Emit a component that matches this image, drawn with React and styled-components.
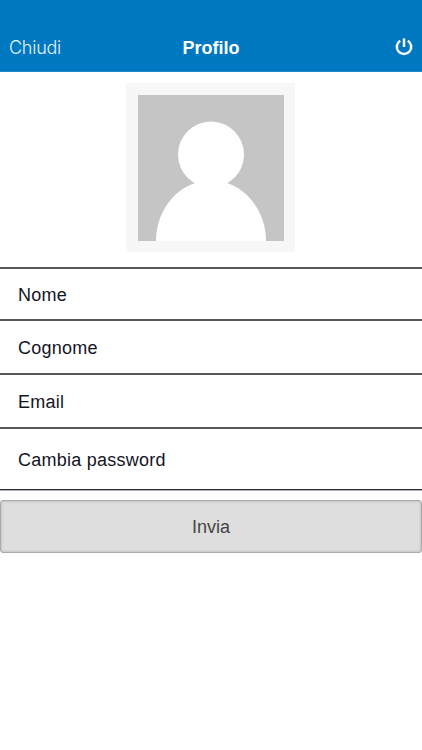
import React from 'react';
import styled, { createGlobalStyle } from 'styled-components';

const GlobalStyle = createGlobalStyle`
  * {
    box-sizing: border-box;
  }
  body {
    margin: 0;
    background-color: #fff;
    font-family: "Liberation Sans", Arial, sans-serif;
  }
`;

const Page = styled.div`
  display: flex;
  flex-direction: column;
  width: 100%;
  min-height: 750px;
  background-color: #fff;
`;

const NavBar = styled.header`
  display: grid;
  grid-template-columns: 1fr auto 1fr;
  align-items: center;
  height: 72px;
  padding: 24px 9px 0 9px;
  background-color: #0078c1;
  border-bottom: 1px solid #2188c8;
  color: #fff;
`;

const CloseButton = styled.button`
  justify-self: start;
  padding: 0;
  border: none;
  background: none;
  color: #e4f3fb;
  font-family: Inter, "Liberation Sans", sans-serif;
  font-size: 18px;
  font-weight: 300;
  letter-spacing: -0.25px;
  line-height: 24px;
`;

const Title = styled.h1`
  margin: 0;
  font-size: 18px;
  font-weight: bold;
  line-height: 24px;
`;

const PowerButton = styled.button`
  display: flex;
  justify-self: end;
  padding: 0 0 2px 0;
  border: none;
  background: none;
  color: #fff;
`;

const AvatarFrame = styled.div`
  align-self: center;
  width: 169px;
  height: 169px;
  margin: 11px 1px 15px 0;
  padding: 12px 11px 11px 12px;
  background-color: #f7f7f7;
  svg {
    display: block;
  }
`;

const FieldList = styled.div`
  display: flex;
  flex-direction: column;
  border-top: 2px solid #59595c;
`;

const Field = styled.div`
  display: flex;
  align-items: center;
  height: ${props => props.$height}px;
  padding: 3px 18px 0 18px;
  border-bottom: 2px solid #59595c;
  color: #14141f;
  font-size: 18px;
  letter-spacing: 0.25px;
  &:last-child {
    height: ${props => props.$height - 1}px;
    border-bottom: 1px solid #2b2932;
    box-shadow: 0 1px 0 #b0b0b6;
  }
`;

const SubmitButton = styled.button`
  height: 53px;
  margin-top: 10px;
  padding: 2px 0 0 0;
  border: 1px solid #aaa;
  border-radius: 3px;
  background-color: #dedede;
  box-shadow: inset 0 0 3px rgba(0, 0, 0, 0.2);
  color: #444;
  font-family: inherit;
  font-size: 18px;
`;

const fields = [
  { label: 'Nome', height: 52 },
  { label: 'Cognome', height: 54 },
  { label: 'Email', height: 54 },
  { label: 'Cambia password', height: 62 },
];

function PowerIcon() {
  return (
    <svg width="18" height="18" viewBox="0 0 18 18" fill="none" stroke="currentColor" strokeWidth="2.5">
      <path d="M5.2 2.7A7.2 7.2 0 1 0 12.8 2.7" />
      <path d="M9 0.4V9" />
    </svg>
  )
}

function Avatar() {
  return (
    <svg width="146" height="146" viewBox="0 0 146 146">
      <rect width="146" height="146" fill="#c5c5c5" />
      <ellipse cx="73" cy="146" rx="55" ry="60.5" fill="#fff" />
      <circle cx="73" cy="59.5" r="33" fill="#fff" />
    </svg>
  )
}

function App() {
  return (
    <Page>
      <GlobalStyle />
      <NavBar>
        <CloseButton>Chiudi</CloseButton>
        <Title>Profilo</Title>
        <PowerButton aria-label="Logout">
          <PowerIcon />
        </PowerButton>
      </NavBar>
      <AvatarFrame>
        <Avatar />
      </AvatarFrame>
      <FieldList>
        {fields.map(field => (
          <Field key={field.label} $height={field.height}>{field.label}</Field>
        ))}
      </FieldList>
      <SubmitButton>Invia</SubmitButton>
    </Page>
  )
}

export default App
